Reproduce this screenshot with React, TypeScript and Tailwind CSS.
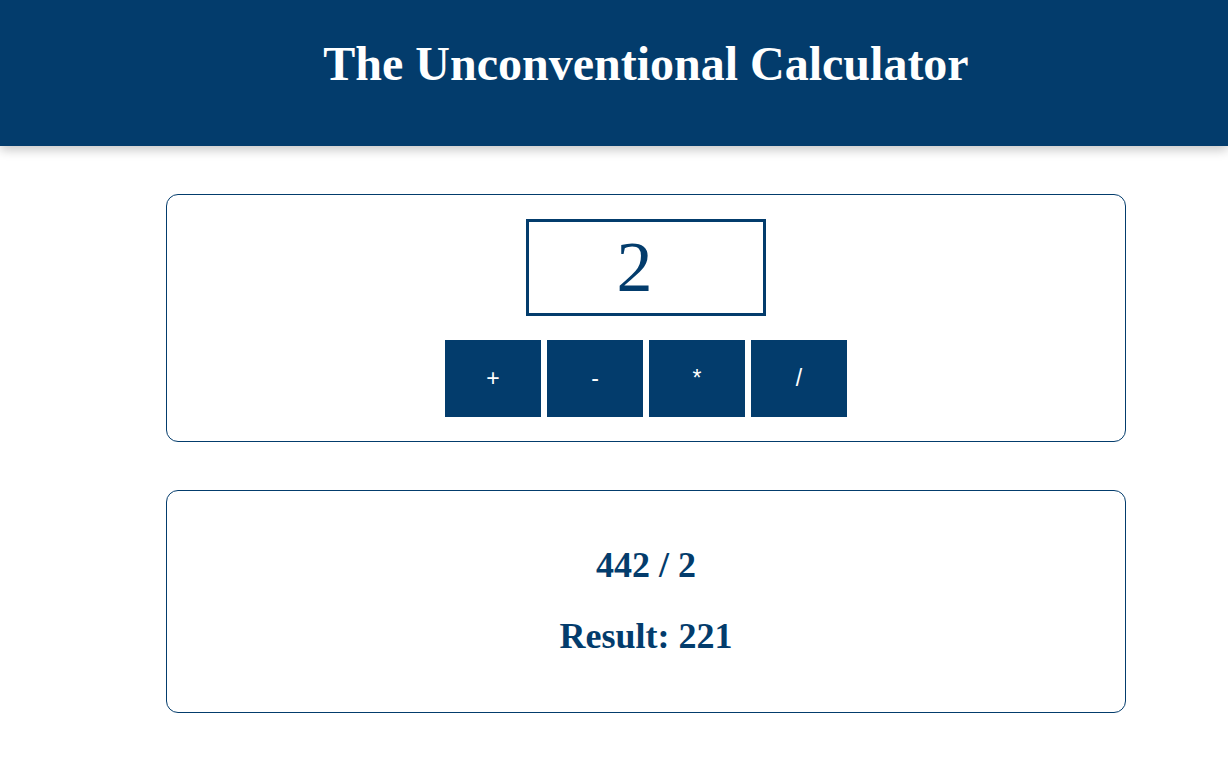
import React, { useState } from "react";

const ops = ["+", "-", "*", "/"];

export default function App() {
    const [value] = useState("2");

    return (
        <div className="min-h-screen bg-white" style={{ fontFamily: '"Liberation Serif", "Times New Roman", serif' }}>
            <header className="relative z-10 h-[146px] bg-[#033c6c] pl-16 pt-[40px] shadow-[0_4px_10px_rgba(0,0,0,0.22)]">
                <h1 className="text-center text-5xl leading-none font-bold text-white">
                    The Unconventional Calculator
                </h1>
            </header>

            <main className="pl-16 pt-12">
                <div className="mx-auto flex w-[960px] flex-col gap-[48px]">
                    <section className="flex flex-col items-center gap-[24px] rounded-xl border border-[#033c6c] pt-6 pb-6">
                        <div className="h-[97px] w-[240px] border-[3px] border-[#033c6c] pr-[23px] text-center text-[72px] leading-[91px] text-[#033c6c]">
                            {value}
                        </div>
                        <div className="flex gap-[6px]">
                            {ops.map((op) => (
                                <button
                                    key={op}
                                    className="h-[77px] w-[96px] bg-[#033c6c] text-[23px] text-white"
                                    style={{ fontFamily: '"Liberation Sans", Arial, sans-serif' }}
                                >
                                    {op}
                                </button>
                            ))}
                        </div>
                    </section>

                    <section className="flex h-[223px] flex-col items-center gap-[31px] rounded-xl border border-[#033c6c] pt-[54px]">
                        <h2 className="text-4xl leading-[40px] font-bold text-[#033c6c]">442 / 2</h2>
                        <h2 className="text-4xl leading-[40px] font-bold text-[#033c6c]">Result: 221</h2>
                    </section>
                </div>
            </main>
        </div>
    );
}
